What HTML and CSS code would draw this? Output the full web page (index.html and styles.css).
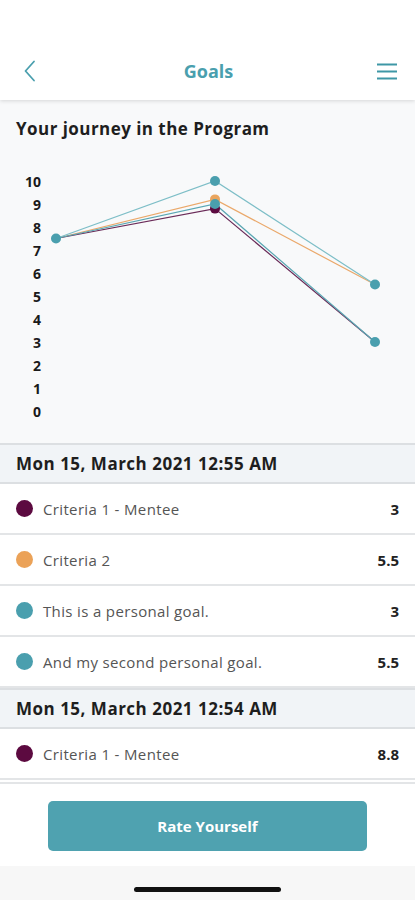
FILE: index.html
```html
<!DOCTYPE html>
<html lang="en">
<head>
    <meta charset="UTF-8">
    <meta name="viewport" content="width=device-width, initial-scale=1.0">
    <title>Goals</title>
    <link rel="stylesheet" href="styles.css">
</head>
<body>
    <div class="app">
        <header class="top-bar">
            <button class="icon-btn" aria-label="Back">
                <svg width="14" height="22" viewBox="0 0 14 22"><path d="M11 1.5 L2.5 11 L11 20.5" fill="none" stroke="#4a9fae" stroke-width="1.8" stroke-linecap="round" stroke-linejoin="round"/></svg>
            </button>
            <h1 class="page-title">Goals</h1>
            <button class="icon-btn" aria-label="Menu">
                <svg width="22" height="18" viewBox="0 0 22 18"><path d="M1 2.5 H21 M1 9.5 H21 M1 16.5 H21" stroke="#3e97a6" stroke-width="2.2"/></svg>
            </button>
        </header>

        <div class="scroll-area">
            <section class="journey">
                <h2 class="journey-title">Your journey in the Program</h2>
                <svg class="chart" width="415" height="303" viewBox="0 0 415 303">
                    <g class="y-labels">
                        <text x="41" y="41">10</text>
                        <text x="41" y="64">9</text>
                        <text x="41" y="87">8</text>
                        <text x="41" y="110">7</text>
                        <text x="41" y="133">6</text>
                        <text x="41" y="156">5</text>
                        <text x="41" y="179">4</text>
                        <text x="41" y="202">3</text>
                        <text x="41" y="225">2</text>
                        <text x="41" y="248">1</text>
                        <text x="41" y="271">0</text>
                    </g>
                    <!-- Criteria 2 -->
                    <polyline points="56,98.5 215,59.4 375,144.5" fill="none" stroke="#eaa86a" stroke-width="1.2"/>
                    <!-- Criteria 1 -->
                    <polyline points="56,98.5 215,68.6 375,202" fill="none" stroke="#6a2b58" stroke-width="1.2"/>
                    <!-- personal goal -->
                    <polyline points="56,98.5 215,64 375,202" fill="none" stroke="#5aa6b2" stroke-width="1.2"/>
                    <!-- second personal goal -->
                    <polyline points="56,98.5 215,41 375,144.5" fill="none" stroke="#7dbec7" stroke-width="1.2"/>

                    <circle cx="215" cy="68.6" r="5" fill="#5c0a40"/>
                    <circle cx="215" cy="59.4" r="5" fill="#e9a55e"/>
                    <circle cx="215" cy="64" r="5" fill="#4a9fae"/>
                    <circle cx="215" cy="41" r="5" fill="#4a9fae"/>
                    <circle cx="56" cy="98.5" r="5" fill="#4a9fae"/>
                    <circle cx="375" cy="144.5" r="5" fill="#4a9fae"/>
                    <circle cx="375" cy="202" r="5" fill="#4a9fae"/>
                </svg>
            </section>

            <div class="entry-head">Mon 15, March 2021 12:55 AM</div>
            <div class="entry-row">
                <span class="dot dot-purple"></span>
                <span class="entry-name">Criteria 1 - Mentee</span>
                <span class="entry-value">3</span>
            </div>
            <div class="entry-row">
                <span class="dot dot-orange"></span>
                <span class="entry-name">Criteria 2</span>
                <span class="entry-value">5.5</span>
            </div>
            <div class="entry-row">
                <span class="dot dot-teal"></span>
                <span class="entry-name">This is a personal goal.</span>
                <span class="entry-value">3</span>
            </div>
            <div class="entry-row">
                <span class="dot dot-teal"></span>
                <span class="entry-name">And my second personal goal.</span>
                <span class="entry-value">5.5</span>
            </div>

            <div class="entry-head">Mon 15, March 2021 12:54 AM</div>
            <div class="entry-row">
                <span class="dot dot-purple"></span>
                <span class="entry-name">Criteria 1 - Mentee</span>
                <span class="entry-value">8.8</span>
            </div>
        </div>

        <footer class="bottom-bar">
            <button class="rate-btn">Rate Yourself</button>
        </footer>
        <div class="home-area">
            <span class="home-indicator"></span>
        </div>
    </div>
</body>
</html>
```

FILE: styles.css
```css
* {
    margin: 0;
    padding: 0;
    box-sizing: border-box;
}

body {
    font-family: "Open Sans", Lato, sans-serif;
    background: #ffffff;
    color: #222;
}

.app {
    width: 415px;
    height: 900px;
    display: flex;
    flex-direction: column;
    overflow: hidden;
}

.top-bar {
    height: 100px;
    padding: 42px 16px 0 18px;
    display: flex;
    align-items: center;
    justify-content: space-between;
    background: #fff;
    box-shadow: 0 1px 4px rgba(0, 0, 0, 0.14);
    position: relative;
    z-index: 2;
    flex-shrink: 0;
}

.icon-btn {
    width: 24px;
    height: 24px;
    display: flex;
    align-items: center;
    justify-content: center;
    background: none;
    border: none;
}

.page-title {
    font-size: 18px;
    font-weight: 700;
    color: #4a9fae;
}

.scroll-area {
    flex: 1;
    overflow: hidden;
    background: #fff;
}

.journey {
    background: #f8f9fa;
}

.journey-title {
    padding: 18px 16px 0;
    font-size: 17px;
    line-height: 22px;
    font-weight: 700;
    letter-spacing: 0.45px;
    color: #1e1e1e;
}

.chart {
    display: block;
}

.y-labels text {
    font-family: "Open Sans", Lato, sans-serif;
    font-size: 14px;
    font-weight: 700;
    fill: #1a1a1a;
    text-anchor: end;
    dominant-baseline: central;
}

.entry-head {
    height: 41px;
    padding: 0 16px;
    display: flex;
    align-items: center;
    background: #f1f4f7;
    border-top: 2px solid #dcdfe2;
    border-bottom: 2px solid #dcdfe2;
    font-size: 17px;
    font-weight: 700;
    letter-spacing: 0.5px;
    color: #1e1e1e;
}

.entry-row {
    height: 51px;
    padding: 0 16px;
    display: flex;
    align-items: center;
    border-bottom: 2px solid #e3e5e7;
}

.dot {
    width: 17px;
    height: 17px;
    border-radius: 50%;
    margin-right: 10px;
    flex-shrink: 0;
}

.dot-purple {
    background: #5c0a40;
}

.dot-orange {
    background: #eba258;
}

.dot-teal {
    background: #4a9fae;
}

.entry-name {
    flex: 1;
    font-size: 15px;
    letter-spacing: 0.35px;
    color: #555;
}

.entry-value {
    font-size: 15px;
    font-weight: 700;
    color: #222;
}

.bottom-bar {
    height: 84px;
    padding-top: 17px;
    display: flex;
    justify-content: center;
    background: #fff;
    border-top: 2px solid #e3e5e7;
    flex-shrink: 0;
}

.rate-btn {
    width: 319px;
    height: 50px;
    border: none;
    border-radius: 5px;
    background: #4fa2b0;
    color: #fff;
    font-family: "Open Sans", Lato, sans-serif;
    font-size: 15px;
    font-weight: 700;
}

.home-area {
    height: 34px;
    background: #f7f7f7;
    display: flex;
    justify-content: center;
    padding-top: 21px;
    flex-shrink: 0;
}

.home-indicator {
    width: 147px;
    height: 5px;
    border-radius: 3px;
    background: #111;
}
```
